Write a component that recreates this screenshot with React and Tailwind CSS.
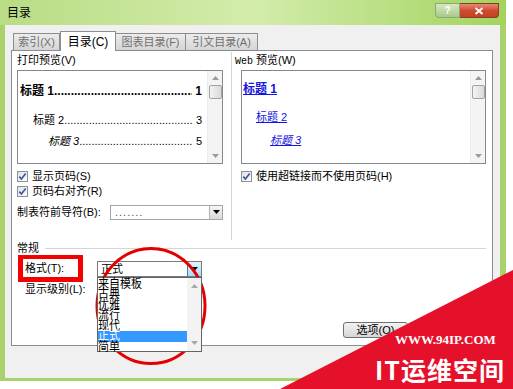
import React from "react";

const DOTS = "....................................................................................";

function Check() {
    return (
        <span className="w-[11px] h-[11px] shrink-0 border border-[#8f8f8f] bg-gradient-to-br from-[#dde3ea] to-[#fbfcfd] flex items-center justify-center">
            <svg width="9" height="9" viewBox="0 0 9 9">
                <path d="M1.3 4.6 L3.4 7 L7.7 1.5" fill="none" stroke="#3c5a96" strokeWidth="1.7"/>
            </svg>
        </span>
    );
}

function Arrow({up = false, color = "#000"}) {
    return (
        <svg width="7" height="4" viewBox="0 0 7 4">
            <path d={up ? "M0 4H7L3.5 0Z" : "M0 0H7L3.5 4Z"} fill={color}/>
        </svg>
    );
}

function ScrollBar({thumb = true}) {
    return (
        <div className="w-[15px] h-full shrink-0 bg-[#f4f4f4] border-l border-[#ececec] flex flex-col items-center">
            <div className="h-[14px] flex items-center justify-center"><Arrow up color="#9a9a9a"/></div>
            {thumb && <div className="w-[13px] h-[14px] rounded-[2px] border border-[#a3a3a3] bg-gradient-to-r from-[#f3f3f3] to-[#dadada]"/>}
            <div className="flex-1"/>
            <div className="h-[14px] flex items-center justify-center"><Arrow color="#9a9a9a"/></div>
        </div>
    );
}

function TocLine({children, num, className}) {
    return (
        <div className={className}>
            <span className="shrink-0 whitespace-nowrap">{children}</span>
            <span className="flex-1 min-w-0 overflow-hidden whitespace-nowrap">{DOTS}</span>
            <span className="shrink-0 pl-[3px]">{num}</span>
        </div>
    );
}

function App() {
    const styles = ["来自模板", "古典", "优雅", "流行", "现代", "正式", "简单"];

    return (
        <div className="relative w-[513px] h-[389px] overflow-hidden bg-white text-[11px] text-black font-['Liberation_Sans','Noto_Sans_CJK_SC',sans-serif]">
            <div className="w-[506px] h-[381px] flex flex-col bg-[#a9d16c] pl-[5px] pr-[6px] pb-[3px]">
                {/* title bar */}
                <div className="h-[25px] -ml-[5px] -mr-[6px] pl-[7px] pr-[7px] flex bg-gradient-to-r from-[#b9dc84] via-[#d3ecab] to-[#a3d35c]">
                    <span className="self-center text-[12px] leading-[14px]">目录</span>
                    <div className="ml-auto mt-[3px] flex h-[15px]">
                        <div className="w-[25px] h-full border border-[#8aa873] rounded-bl-[4px] bg-gradient-to-b from-[#d6e8c0] to-[#a9c98a] flex items-center justify-center text-[10px] leading-[10px] font-bold text-white">?</div>
                        <div className="w-[39px] h-full border border-l-0 border-[#8b3a2a] rounded-br-[4px] bg-gradient-to-b from-[#e58b76] via-[#cf4a2f] to-[#c24125] flex items-center justify-center">
                            <svg width="10" height="8" viewBox="0 0 10 8">
                                <path d="M1.5 1 L8.5 7 M8.5 1 L1.5 7" stroke="#fff" strokeWidth="2"/>
                            </svg>
                        </div>
                    </div>
                </div>

                {/* body */}
                <div className="flex-1 flex flex-col bg-[#f0f0f0] pl-[6px] pr-[7px] pt-[6px]">
                    <div className="flex items-end h-[19px] ml-[2px] text-[11px] leading-[14px]">
                        <div className="w-[47px] h-[17px] border border-b-0 border-[#8d8d8d] bg-gradient-to-b from-[#ececec] to-[#d5d5d5] text-[#707070] flex items-center justify-center">索引(X)</div>
                        <div className="relative z-10 -mb-px w-[56px] h-[20px] border border-b-0 border-[#8d8d8d] bg-white flex items-center justify-center text-[12px]">目录(C)</div>
                        <div className="w-[70px] h-[17px] border border-b-0 border-l-0 border-[#8d8d8d] bg-gradient-to-b from-[#ececec] to-[#d5d5d5] text-[#707070] flex items-center justify-center">图表目录(F)</div>
                        <div className="w-[72px] h-[17px] border border-b-0 border-l-0 border-[#8d8d8d] bg-gradient-to-b from-[#ececec] to-[#d5d5d5] text-[#707070] flex items-center justify-center">引文目录(A)</div>
                    </div>

                    {/* tab panel */}
                    <div className="h-[296px] border border-[#898c95] bg-white pl-[5px] pr-[6px] pt-[1px] flex flex-col">
                        <div className="flex h-[188px]">
                            {/* print preview */}
                            <div className="w-[216px] border-r border-[#d5d5d5] flex flex-col">
                                <div className="h-[16px] leading-[16px]">打印预览(V)</div>
                                <div className="mt-[2px] w-[206px] h-[94px] border border-[#828790] bg-white flex">
                                    <div className="flex-1 min-w-0 flex flex-col pl-[2px] pr-[5px]">
                                        <TocLine num="1" className="mt-[13px] flex items-end h-[14px] text-[12px] leading-[14px] font-bold">标题 1</TocLine>
                                        <TocLine num="3" className="mt-[15px] pl-[13px] flex items-end h-[14px] text-[11px] leading-[14px]">标题 2</TocLine>
                                        <TocLine num="5" className="mt-[7px] pl-[28px] flex items-end h-[14px] text-[11px] leading-[14px]"><i>标题 3</i></TocLine>
                                    </div>
                                    <ScrollBar/>
                                </div>
                                <div className="mt-[5px] h-[15px] flex items-center gap-[4px]"><Check/><span>显示页码(S)</span></div>
                                <div className="h-[15px] flex items-center gap-[4px]"><Check/><span>页码右对齐(R)</span></div>
                                <div className="mt-[5px] h-[16px] flex items-center">
                                    <span className="w-[93px]">制表符前导符(B):</span>
                                    <div className="w-[113px] h-[15px] border border-[#a5a5a5] bg-white flex">
                                        <span className="flex-1 pl-[4px] leading-[12px] text-[#555] tracking-[1px]">.......</span>
                                        <div className="w-[13px] h-full border-l border-[#b5b5b5] bg-gradient-to-b from-[#f5f5f5] to-[#d9d9d9] flex items-center justify-center"><Arrow/></div>
                                    </div>
                                </div>
                            </div>

                            {/* web preview */}
                            <div className="flex-1 pl-[3px] flex flex-col">
                                <div className="h-[16px] leading-[16px]"><span className="font-['Liberation_Mono',monospace] text-[10px]">Web</span> 预览(W)</div>
                                <div className="ml-[6px] mt-[2px] w-[245px] h-[94px] border border-[#828790] bg-white flex">
                                    <div className="flex-1 flex flex-col items-start text-[#1515e0] underline leading-[14px]">
                                        <span className="mt-[11px] ml-[1px] font-bold text-[12px]">标题 1</span>
                                        <span className="mt-[14px] ml-[14px]">标题 2</span>
                                        <span className="mt-[9px] ml-[28px] italic">标题 3</span>
                                    </div>
                                    <ScrollBar/>
                                </div>
                                <div className="ml-[6px] mt-[5px] h-[15px] flex items-center gap-[4px]"><Check/><span>使用超链接而不使用页码(H)</span></div>
                            </div>
                        </div>

                        {/* general */}
                        <div className="mt-[1px] h-[14px] flex items-center">
                            <span className="leading-[14px]">常规</span>
                            <div className="flex-1 ml-[6px] border-t border-[#d5d5d5]"/>
                        </div>
                        <div className="h-[27px] flex items-center">
                            <div className="ml-[1px] w-[65px] h-[27px] border-[5px] border-t-[4px] border-[#f40000] bg-white pl-[2px] flex items-center leading-[14px]">格式(T):</div>
                            <div className="relative ml-[14px] w-[105px] h-[16px] border border-[#7a7a7a] bg-white flex">
                                <span className="flex-1 pl-[3px] leading-[14px]">正式</span>
                                <div className="w-[14px] h-full border-l border-[#3c7fb1] bg-gradient-to-b from-[#e3f4fc] to-[#a9dbf6] flex items-center justify-center"><Arrow/></div>
                                <div className="absolute z-20 left-[-1px] top-[15px] w-[105px] h-[75px] border border-[#646464] bg-white flex">
                                    <div className="flex-1 flex flex-col pt-[1px]">
                                        {styles.map(s => (
                                            <div key={s} className={s === "正式" ? "h-[10.5px] bg-[#3399ff] text-white" : "h-[10.5px]"}>
                                                <span className="block text-[11px] leading-[10.5px] scale-y-[1.12]">{s}</span>
                                            </div>
                                        ))}
                                    </div>
                                    <div className="w-[14px] h-full bg-[#f3f3f3] flex flex-col items-center justify-between py-[6px]">
                                        <Arrow up color="#a8a8a8"/>
                                        <Arrow color="#a8a8a8"/>
                                    </div>
                                </div>
                            </div>
                        </div>
                        <div className="h-[14px] pl-[8px] leading-[14px]">显示级别(L):</div>
                        <div className="mt-[26px] ml-[326px] w-[65px] h-[16px] rounded-[3px] border border-[#707070] bg-gradient-to-b from-[#f2f2f2] to-[#d6d6d6] flex items-center justify-center leading-[14px]">选项(O)</div>
                    </div>
                </div>
            </div>

            {/* red circle annotation */}
            <svg className="absolute left-[94px] top-[246px]" width="114" height="120" viewBox="0 0 114 120">
                <ellipse cx="57" cy="60" rx="54" ry="57.5" fill="none" stroke="#e40000" strokeWidth="3"/>
            </svg>

            {/* watermark */}
            <svg className="absolute right-0 bottom-0" width="233" height="119" viewBox="0 0 233 119">
                <polygon points="0,119 233,0 233,119" fill="#e5112b"/>
            </svg>
            <div className="absolute left-[395px] top-[333px] whitespace-nowrap text-[13px] leading-[14px] font-bold text-white font-['Liberation_Serif',serif]">WWW.94IP.COM</div>
            <div className="absolute left-[375px] top-[354px] whitespace-nowrap text-[25px] leading-[30px] font-bold text-white tracking-[1px] font-['Noto_Sans_CJK_SC',sans-serif]">IT运维空间</div>
        </div>
    );
}

export default App;
